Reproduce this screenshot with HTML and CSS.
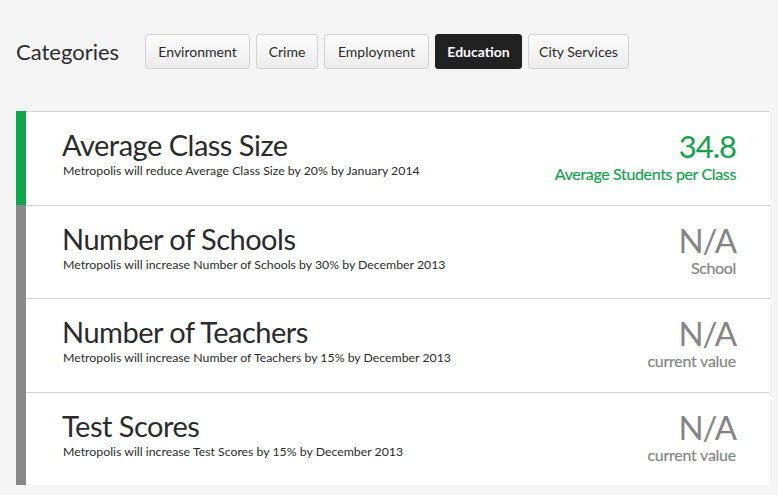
FILE: index.html
```html
<!DOCTYPE html>
<html>
<head>
<meta charset="utf-8">
<link rel="stylesheet" href="styles.css">
</head>
<body>
<div class="header">
  <h1 class="heading">Categories</h1>
  <div class="tabs">
    <span class="tab">Environment</span>
    <span class="tab">Crime</span>
    <span class="tab">Employment</span>
    <span class="tab active">Education</span>
    <span class="tab">City Services</span>
  </div>
</div>
<div class="list">
  <div class="row first">
    <div class="bar green"></div>
    <div class="info">
      <div class="title">Average Class Size</div>
      <div class="desc">Metropolis will reduce Average Class Size by 20% by January 2014</div>
    </div>
    <div class="stat good">
      <div class="value small">34.8</div>
      <div class="unit">Average Students per Class</div>
    </div>
  </div>
  <div class="row">
    <div class="bar"></div>
    <div class="info">
      <div class="title">Number of Schools</div>
      <div class="desc">Metropolis will increase Number of Schools by 30% by December 2013</div>
    </div>
    <div class="stat">
      <div class="value">N/A</div>
      <div class="unit">School</div>
    </div>
  </div>
  <div class="row">
    <div class="bar"></div>
    <div class="info">
      <div class="title">Number of Teachers</div>
      <div class="desc">Metropolis will increase Number of Teachers by 15% by December 2013</div>
    </div>
    <div class="stat">
      <div class="value">N/A</div>
      <div class="unit tight">current value</div>
    </div>
  </div>
  <div class="row">
    <div class="bar"></div>
    <div class="info">
      <div class="title">Test Scores</div>
      <div class="desc">Metropolis will increase Test Scores by 15% by December 2013</div>
    </div>
    <div class="stat">
      <div class="value">N/A</div>
      <div class="unit tight">current value</div>
    </div>
  </div>
</div>
</body>
</html>
```

FILE: styles.css
```css
html, body {
  margin: 0;
  padding: 0;
  background: #f5f5f5;
  font-family: "Lato", "Open Sans", sans-serif;
  color: #2b2b2b;
}
.header {
  display: flex;
  align-items: center;
  padding: 34px 0 0 16px;
  height: 35px;
}
.heading {
  margin: 0;
  font-size: 22px;
  font-weight: 400;
  width: 129px;
  color: #2e2e2e;
}
.tabs {
  display: flex;
  gap: 6px;
}
.tab {
  display: flex;
  align-items: center;
  justify-content: center;
  box-sizing: border-box;
  height: 35px;
  padding: 0 4px;
  font-size: 14px;
  white-space: nowrap;
  border: 1px solid #d2d2d2;
  border-radius: 3px;
  background: linear-gradient(#fcfcfc, #ececec);
  color: #2a2a2a;
}
.tab:nth-child(1) { width: 105px; }
.tab:nth-child(2) { width: 62px; }
.tab:nth-child(3) { width: 105px; }
.tab:nth-child(4) { width: 87px; }
.tab:nth-child(5) { width: 101px; }
.tab.active {
  background: #212121;
  border-color: #212121;
  color: #fff;
  font-weight: 700;
}
.list {
  margin: 42px 0 0 16px;
  width: 754px;
  background: #fff;
}
.row {
  display: flex;
  height: 93px;
  border-top: 1px solid #d4d4d4;
}
.row:nth-child(even) {
  height: 92px;
}
.bar {
  width: 10px;
  background: #888;
  margin-top: -1px;
  flex: none;
}
.bar.green { background: #0ea54d; }
.info {
  flex: 1;
  padding: 15px 0 0 36px;
}
.title {
  font-size: 29px;
  line-height: 36px;
  letter-spacing: -0.5px;
  color: #2b2b2b;
}
.desc {
  font-size: 12.3px;
  line-height: 16px;
  margin-left: 1px;
  color: #2b2b2b;
}
.stat {
  padding: 19px 34px 0 0;
  text-align: right;
  color: #858585;
}
.value {
  font-size: 33px;
  line-height: 30px;
  letter-spacing: -1px;
}
.value.small {
  font-size: 31px;
}
.unit {
  margin-top: 4px;
  font-size: 16px;
  line-height: 18px;
  letter-spacing: -0.35px;
  -webkit-text-stroke: 0.2px currentColor;
}
.unit.tight {
  letter-spacing: -0.25px;
}
.stat.good { color: #13a24b; }
```
